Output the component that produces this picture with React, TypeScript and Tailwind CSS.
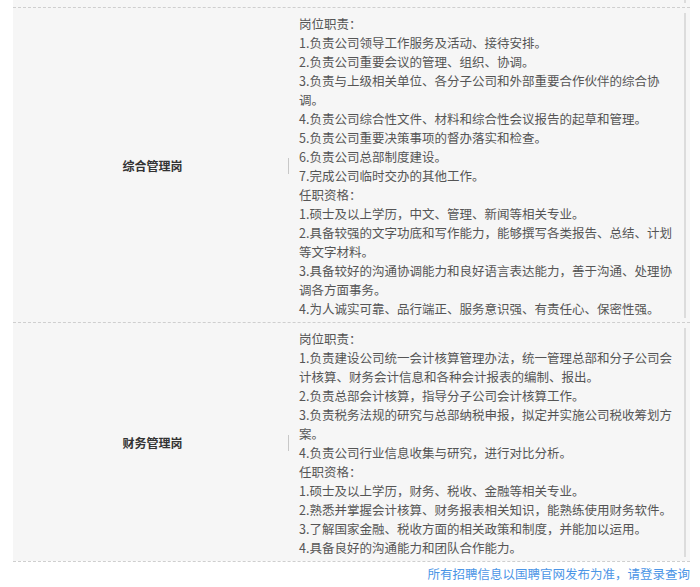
import React from "react";

const rows: { title: string; lines: string[] }[] = [
  {
    title: "综合管理岗",
    lines: [
      "岗位职责：",
      "1.负责公司领导工作服务及活动、接待安排。",
      "2.负责公司重要会议的管理、组织、协调。",
      "3.负责与上级相关单位、各分子公司和外部重要合作伙伴的综合协",
      "调。",
      "4.负责公司综合性文件、材料和综合性会议报告的起草和管理。",
      "5.负责公司重要决策事项的督办落实和检查。",
      "6.负责公司总部制度建设。",
      "7.完成公司临时交办的其他工作。",
      "任职资格：",
      "1.硕士及以上学历，中文、管理、新闻等相关专业。",
      "2.具备较强的文字功底和写作能力，能够撰写各类报告、总结、计划",
      "等文字材料。",
      "3.具备较好的沟通协调能力和良好语言表达能力，善于沟通、处理协",
      "调各方面事务。",
      "4.为人诚实可靠、品行端正、服务意识强、有责任心、保密性强。",
    ],
  },
  {
    title: "财务管理岗",
    lines: [
      "岗位职责：",
      "1.负责建设公司统一会计核算管理办法，统一管理总部和分子公司会",
      "计核算、财务会计信息和各种会计报表的编制、报出。",
      "2.负责总部会计核算，指导分子公司会计核算工作。",
      "3.负责税务法规的研究与总部纳税申报，拟定并实施公司税收筹划方",
      "案。",
      "4.负责公司行业信息收集与研究，进行对比分析。",
      "任职资格：",
      "1.硕士及以上学历，财务、税收、金融等相关专业。",
      "2.熟悉并掌握会计核算、财务报表相关知识，能熟练使用财务软件。",
      "3.了解国家金融、税收方面的相关政策和制度，并能加以运用。",
      "4.具备良好的沟通能力和团队合作能力。",
    ],
  },
];

export default function App() {
  return (
    <div
      className="w-[700px] h-[587px] bg-white overflow-hidden"
      style={{ fontFamily: '"Noto Sans CJK SC", "Noto Sans", sans-serif' }}
    >
      <div className="ml-[13px] w-[677px]">
        <div className="bg-[#f6f6f6] h-[7px] flex justify-end pr-[4px]">
          <div className="w-[2px] h-[3px] bg-[#dcdcdc]" />
        </div>
        {rows.map((row) => (
          <div
            key={row.title}
            className="flex bg-[#f6f6f6] border-t border-dashed border-[#cfcfcf] pt-[5px] pb-[4px]"
          >
            <div className="w-[275px] shrink-0 flex items-center justify-center text-[12px] font-bold text-[#333] pl-[4px]">
              {row.title}
            </div>
            <div className="w-px h-[16px] bg-[#c8c8c8] self-center shrink-0" />
            <div className="flex-1 mr-[4px] border-r-2 border-[#dcdcdc] pl-[10px] pt-[1px] text-[12.5px] leading-[19px] text-[#555]">
              {row.lines.map((l, i) => (
                <div key={i} className="whitespace-nowrap">
                  {l}
                </div>
              ))}
            </div>
          </div>
        ))}
        <div className="border-t border-dashed border-[#cfcfcf] pt-[2px] text-right text-[12.5px] leading-[19px] text-[#4b95e6]">
          所有招聘信息以国聘官网发布为准，请登录查询
        </div>
      </div>
    </div>
  );
}
